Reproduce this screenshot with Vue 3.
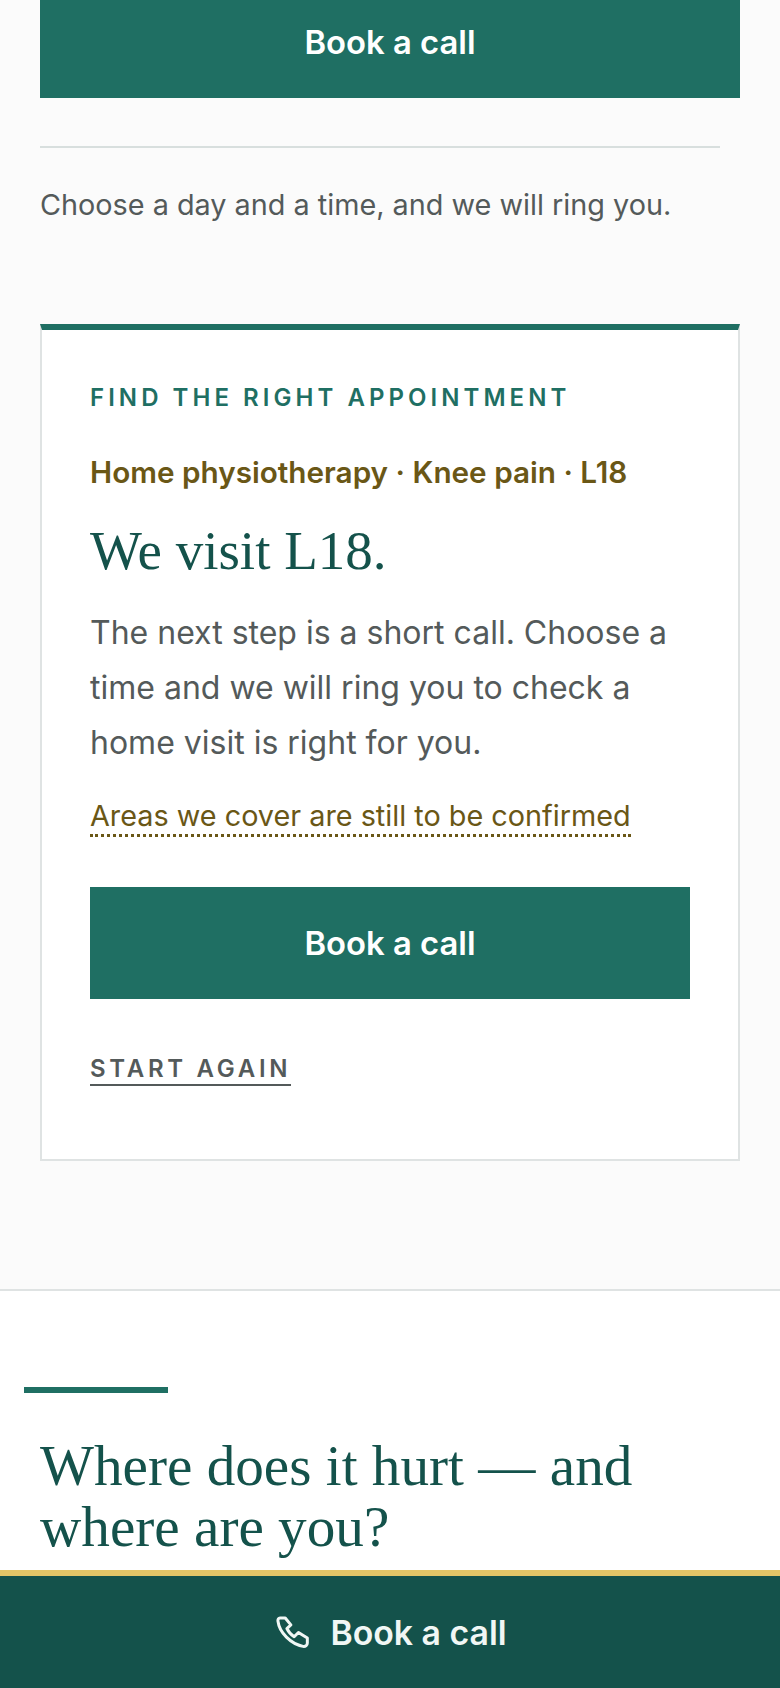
<template>
  <div class="page">
    <section class="booking">
      <a class="btn">Book a call</a>
      <hr class="rule" />
      <p class="lead">Choose a day and a time, and we will ring you.</p>

      <div class="card">
        <div class="eyebrow">FIND THE RIGHT APPOINTMENT</div>
        <div class="summary">Home physiotherapy · Knee pain · L18</div>
        <h2 class="title">We visit L18.</h2>
        <p class="copy">The next step is a short call. Choose a time and we will ring you to check a home visit is right for you.</p>
        <div class="note-row"><span class="note">Areas we cover are still to be confirmed</span></div>
        <a class="btn btn-card">Book a call</a>
        <a class="restart">START AGAIN</a>
      </div>
    </section>

    <section class="where">
      <div class="accent"></div>
      <h2 class="where-title">Where does it hurt — and<br />where are you?</h2>
    </section>

    <div class="sticky-bar">
      <svg class="phone" viewBox="80 80 100 97" fill="none" stroke="currentColor" stroke-width="9" stroke-linejoin="round">
        <path d="M92 86C88 86 85 90 86 96C90 130 125 165 162 172C170 173 175 168 175 162L175 147L148 130L135 143C125 137 118 128 113 118L125 107L108 86Z" />
      </svg>
      <span>Book a call</span>
    </div>
  </div>
</template>

<script setup>
</script>

<style>
html, body {
  margin: 0;
  background: #fff;
}
</style>

<style scoped>
.page {
  height: 1688px;
  overflow: hidden;
  font-family: Inter, "Liberation Sans", sans-serif;
  background: #fff;
}

.booking {
  margin-top: -14px;
  padding: 0 40px 128px;
  background: #fbfbfb;
  border-bottom: 2px solid #dfe3e3;
}

.btn {
  display: flex;
  align-items: center;
  justify-content: center;
  height: 112px;
  background: #1f6f63;
  color: #fff;
  font-size: 32.8px;
  font-weight: 600;
}

.rule {
  border: 0;
  height: 2px;
  background: #d8dfde;
  width: 680px;
  margin: 48px 0 0;
}

.lead {
  margin: 37px 0 0;
  font-size: 28.8px;
  line-height: 40px;
  color: #545a5a;
}

.card {
  margin-top: 99px;
  background: #fff;
  border: 2px solid #dfe3e3;
  border-top: 6px solid #1f6f63;
  padding: 53px 48px 73px;
}

.eyebrow {
  font-size: 24px;
  line-height: 30px;
  font-weight: 600;
  letter-spacing: 4.05px;
  color: #1f6f63;
}

.summary {
  margin-top: 39px;
  font-size: 29.7px;
  line-height: 40px;
  font-weight: 600;
  color: #6a5716;
}

.title {
  margin: 25px 0 0;
  font-family: "Liberation Serif", serif;
  font-weight: 400;
  font-size: 55px;
  line-height: 68px;
  color: #14524b;
}

.copy {
  margin: 20px 0 0;
  font-size: 32px;
  line-height: 55px;
  color: #545a5a;
}

.note-row {
  margin-top: 27px;
}

.note {
  font-size: 28.8px;
  line-height: 38px;
  color: #6a5716;
  border-bottom: 3px dotted #6a5716;
  padding-bottom: 1px;
}

.btn-card {
  margin-top: 52px;
}

.restart {
  display: inline-block;
  margin-top: 55px;
  font-size: 24px;
  line-height: 30px;
  font-weight: 600;
  letter-spacing: 3.7px;
  color: #545a5a;
  border-bottom: 2px solid #545a5a;
}

.where {
  padding: 96px 40px 0;
}

.accent {
  width: 144px;
  height: 6px;
  margin-left: -16px;
  background: #1f6f63;
}

.where-title {
  margin: 42px 0 0;
  font-family: "Liberation Serif", serif;
  font-weight: 400;
  font-size: 57.2px;
  line-height: 61px;
  color: #14524b;
}

.sticky-bar {
  position: fixed;
  left: 0;
  right: 0;
  bottom: 0;
  height: 118px;
  box-sizing: border-box;
  padding-left: 3px;
  border-top: 6px solid #e3c567;
  background: #14524b;
  color: #f1f7f5;
  display: flex;
  align-items: center;
  justify-content: center;
  gap: 21px;
  font-size: 33.8px;
  font-weight: 600;
}

.phone {
  width: 33px;
  height: 32px;
}
</style>
